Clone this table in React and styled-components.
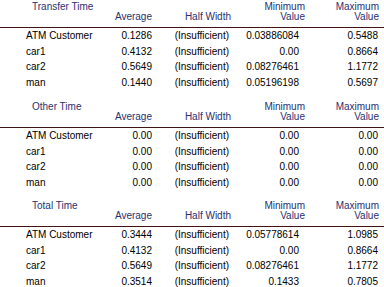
import React from "react";
import styled, { createGlobalStyle } from "styled-components";

const GlobalStyle = createGlobalStyle`
  html, body {
    margin: 0;
    padding: 0;
    background: #ffffff;
  }
  body {
    font-family: "Liberation Sans", Arial, sans-serif;
    font-size: 10px;
    color: #000;
  }
`;

const COLS = "110px 42px 79px 74px 74px 5px";

const Page = styled.div`
  width: 384px;
  height: 287px;
  overflow: hidden;
`;

const Section = styled.div`
  height: ${(p) => p.$h}px;
`;

const Head = styled.div`
  display: grid;
  grid-template-columns: ${COLS};
  grid-template-rows: 10px 10px;
  padding: 2px 0 5px;
  line-height: 10px;
  color: #2a3170;
  border-bottom: 1px solid #3e1414;
`;

const Title = styled.div`
  grid-column: 1;
  grid-row: 1;
  padding-left: 32px;
  white-space: nowrap;
`;

const ColHead = styled.div`
  grid-column: ${(p) => p.$col};
  grid-row: ${(p) => p.$row};
  text-align: right;
  white-space: nowrap;
`;

const Row = styled.div`
  display: grid;
  grid-template-columns: ${COLS};
  height: 15.5px;
  line-height: 15px;
  white-space: nowrap;
`;

const Label = styled.div`
  padding-left: 26px;
`;

const Cell = styled.div`
  text-align: right;
  padding-right: ${(p) => p.$pad || 0}px;
`;

const sections = [
  {
    title: "Transfer Time",
    h: 100,
    rows: [
      ["ATM Customer", "0.1286", "0.03886084", "0.5488"],
      ["car1", "0.4132", "0.00", "0.8664"],
      ["car2", "0.5649", "0.08276461", "1.1772"],
      ["man", "0.1440", "0.05196198", "0.5697"],
    ],
  },
  {
    title: "Other Time",
    h: 99,
    rows: [
      ["ATM Customer", "0.00", "0.00", "0.00"],
      ["car1", "0.00", "0.00", "0.00"],
      ["car2", "0.00", "0.00", "0.00"],
      ["man", "0.00", "0.00", "0.00"],
    ],
  },
  {
    title: "Total Time",
    h: 88,
    rows: [
      ["ATM Customer", "0.3444", "0.05778614", "1.0985"],
      ["car1", "0.4132", "0.00", "0.8664"],
      ["car2", "0.5649", "0.08276461", "1.1772"],
      ["man", "0.3514", "0.1433", "0.7805"],
    ],
  },
];

export default function App() {
  return (
    <>
      <GlobalStyle />
      <Page>
        {sections.map((s) => (
          <Section key={s.title} $h={s.h}>
            <Head>
              <Title>{s.title}</Title>
              <ColHead $col={2} $row={2}>Average</ColHead>
              <ColHead $col={3} $row={2}>Half Width</ColHead>
              <ColHead $col={4} $row={1}>Minimum</ColHead>
              <ColHead $col={4} $row={2}>Value</ColHead>
              <ColHead $col={5} $row={1}>Maximum</ColHead>
              <ColHead $col={5} $row={2}>Value</ColHead>
            </Head>
            {s.rows.map((r, i) => (
              <Row key={i}>
                <Label>{r[0]}</Label>
                <Cell>{r[1]}</Cell>
                <Cell $pad={2}>(Insufficient)</Cell>
                <Cell $pad={6}>{r[2]}</Cell>
                <Cell $pad={1}>{r[3]}</Cell>
              </Row>
            ))}
          </Section>
        ))}
      </Page>
    </>
  );
}
